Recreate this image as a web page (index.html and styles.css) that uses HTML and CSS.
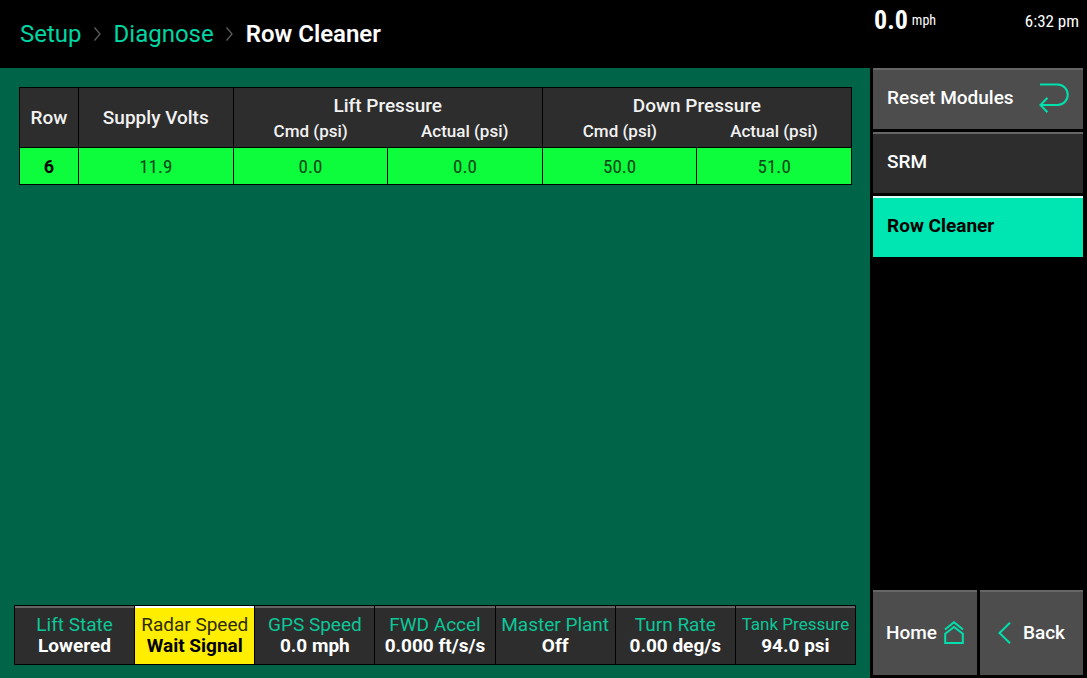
FILE: index.html
```html
<!DOCTYPE html>
<html lang="en">
<head>
<meta charset="utf-8">
<title>Diagnose - Row Cleaner</title>
<link rel="stylesheet" href="styles.css">
</head>
<body>
<div class="app">
  <div class="main">
    <header class="topbar">
      <nav class="crumbs" aria-label="Breadcrumb">
        <a href="#">Setup</a>
        <svg class="sep" viewBox="0 0 8 16" aria-hidden="true"><path d="M.5 1.5 6 8 .5 14.5"/></svg>
        <a href="#">Diagnose</a>
        <svg class="sep" viewBox="0 0 8 16" aria-hidden="true"><path d="M.5 1.5 6 8 .5 14.5"/></svg>
        <h1>Row Cleaner</h1>
      </nav>
    </header>
    <main class="content">
      <table class="rows">
        <colgroup><col class="col-row"><col><col><col><col><col></colgroup>
        <thead>
          <tr class="groups">
            <th rowspan="2">Row</th>
            <th rowspan="2">Supply Volts</th>
            <th colspan="2" class="group">Lift Pressure</th>
            <th colspan="2" class="group">Down Pressure</th>
          </tr>
          <tr class="subs">
            <th class="sub-left">Cmd (psi)</th>
            <th class="sub-right">Actual (psi)</th>
            <th class="sub-left">Cmd (psi)</th>
            <th class="sub-right">Actual (psi)</th>
          </tr>
        </thead>
        <tbody>
          <tr>
            <th>6</th>
            <td>11.9</td>
            <td>0.0</td>
            <td>0.0</td>
            <td>50.0</td>
            <td>51.0</td>
          </tr>
        </tbody>
      </table>
      <dl class="status">
        <div class="cell"><dt>Lift State</dt><dd>Lowered</dd></div>
        <div class="cell warn"><dt>Radar Speed</dt><dd>Wait Signal</dd></div>
        <div class="cell"><dt>GPS Speed</dt><dd>0.0 mph</dd></div>
        <div class="cell"><dt>FWD Accel</dt><dd>0.000 ft/s/s</dd></div>
        <div class="cell"><dt>Master Plant</dt><dd>Off</dd></div>
        <div class="cell"><dt>Turn Rate</dt><dd>0.00 deg/s</dd></div>
        <div class="cell"><dt class="long">Tank Pressure</dt><dd>94.0 psi</dd></div>
      </dl>
    </main>
  </div>
  <aside class="side">
    <div class="info">
      <div class="speed"><strong>0.0</strong><span>mph</span></div>
      <time class="clock">6:32 pm</time>
    </div>
    <div class="menu">
      <button type="button" class="item action">Reset Modules
        <svg class="icon-reset" viewBox="0 0 30 30" aria-hidden="true"><path d="M1 1.5H18.5A10.2 10.2 0 0 1 18.5 22H1.5M8.5 14.8 1.5 22 8.5 29.2"/></svg>
      </button>
      <button type="button" class="item">SRM</button>
      <button type="button" class="item current">Row Cleaner</button>
    </div>
    <div class="foot">
      <button type="button" class="nav">Home
        <svg class="icon-home" viewBox="0 0 20 23" aria-hidden="true"><path d="M1 8.5 10 1.2 19 8.5M1.2 12.8 10 6 18.8 12.8V22H1.2Z"/></svg>
      </button>
      <button type="button" class="nav back">
        <svg class="icon-back" viewBox="0 0 13 22" aria-hidden="true"><path d="M12 .8 1.5 11 12 21.2"/></svg>
        Back
      </button>
    </div>
  </aside>
</div>
</body>
</html>
```
FILE: styles.css
```css
* { box-sizing: border-box; }

body {
  margin: 0;
  background: #000;
  color: #fff;
  font-family: Roboto, "Liberation Sans", sans-serif;
}

.app {
  display: grid;
  grid-template-columns: 1fr 217px;
  min-height: 100vh;
}

.main { display: flex; flex-direction: column; }

.topbar {
  display: flex;
  align-items: center;
  height: 68px;
  padding: 0 20px;
}

.crumbs {
  display: flex;
  align-items: center;
  gap: 12px;
  font-size: 24px;
  line-height: 28px;
}
.crumbs a { color: #00d6a3; text-decoration: none; }
.crumbs h1 { margin: 0; font-size: 24px; font-weight: 600; }
.sep { width: 8px; height: 16px; }

svg { flex: none; fill: none; stroke: #00e0ac; stroke-width: 2; }
.sep { stroke: #5c5c5c; stroke-width: 1.3; }

.content {
  flex: 1;
  display: flex;
  flex-direction: column;
  justify-content: space-between;
  padding: 19px 14px 13px;
  background: #006548;
}

.rows {
  width: calc(100% - 9px);
  margin: 0 4px 0 5px;
  border-collapse: collapse;
  table-layout: fixed;
  border: 1px solid #000;
  text-align: center;
}
.col-row { width: 59px; }
.rows th, .rows td { padding: 0; border: 1px solid #000; font-size: 19px; }
.rows thead th { background: #2d2d2d; color: #f2f2f2; font-weight: 500; }
.rows .group { height: 33px; border-bottom: 0; vertical-align: bottom; line-height: 30px; }
.rows .subs th { height: 27px; border-top: 0; font-size: 17px; line-height: 20px; vertical-align: top; }
.rows .sub-left { border-right: 0; }
.rows .sub-right { border-left: 0; }
.rows tbody th, .rows tbody td { height: 37px; background: #0dfc3c; color: #000; }
.rows tbody th { font-size: 18px; }
.rows tbody td { color: #06461a; font-family: "Roboto Condensed", Roboto, sans-serif; font-weight: 400; }

.status {
  display: grid;
  grid-template-columns: repeat(7, 1fr);
  gap: 1px;
  margin: 0;
  padding: 1px;
  background: #000;
  text-align: center;
}
.cell {
  height: 58px;
  padding-top: 6px;
  border-top: 2px solid #666;
  background: #2d2d2d;
  white-space: nowrap;
  font-size: 19px;
  line-height: 21px;
}
.cell dt { color: #0bc798; }
.cell dt.long { font-size: 17px; }
.cell dd { margin: 0; font-weight: 700; }
.warn { border-top-color: #fff; background: #ffee00; color: #000; }
.warn dt { color: #2e2b00; }

.side {
  display: flex;
  flex-direction: column;
  padding: 0 4px 3px 3px;
}

.info {
  display: flex;
  justify-content: space-between;
  height: 68px;
  padding: 7px 4px 0 1px;
}
.info, .info span { font-family: "Roboto Condensed", Roboto, sans-serif; }
.speed { display: flex; gap: 4px; line-height: 26px; }
.speed strong { font-size: 26px; }
.speed span { font-size: 14px; }
.clock { font-size: 17px; line-height: 28px; }

.menu { display: flex; flex-direction: column; gap: 3px; }

button {
  margin: 0;
  border: 0;
  border-top: 2px solid #666;
  border-radius: 0;
  font: 500 19px/22px Roboto, "Liberation Sans", sans-serif;
  color: #fff;
}

.item {
  display: flex;
  align-items: center;
  justify-content: space-between;
  height: 61px;
  padding: 0 14px 3px 14px;
  background: #2d2d2d;
  text-align: left;
}
.item.action, .nav { background: #4d4d4d; }
.item.current { border-top-color: #dffff6; background: #00e6b3; color: #000; font-weight: 700; }

.icon-reset { width: 30px; height: 30px; }

.foot {
  display: grid;
  grid-template-columns: 1fr 1fr;
  gap: 3px;
  margin-top: auto;
}
.nav {
  display: flex;
  align-items: center;
  justify-content: space-between;
  height: 85px;
  padding: 0 13px 2px 13px;
}
.nav.back { padding: 0 18px 2px 18px; }
.icon-home { width: 20px; height: 23px; }
.icon-back { width: 13px; height: 22px; }
```
